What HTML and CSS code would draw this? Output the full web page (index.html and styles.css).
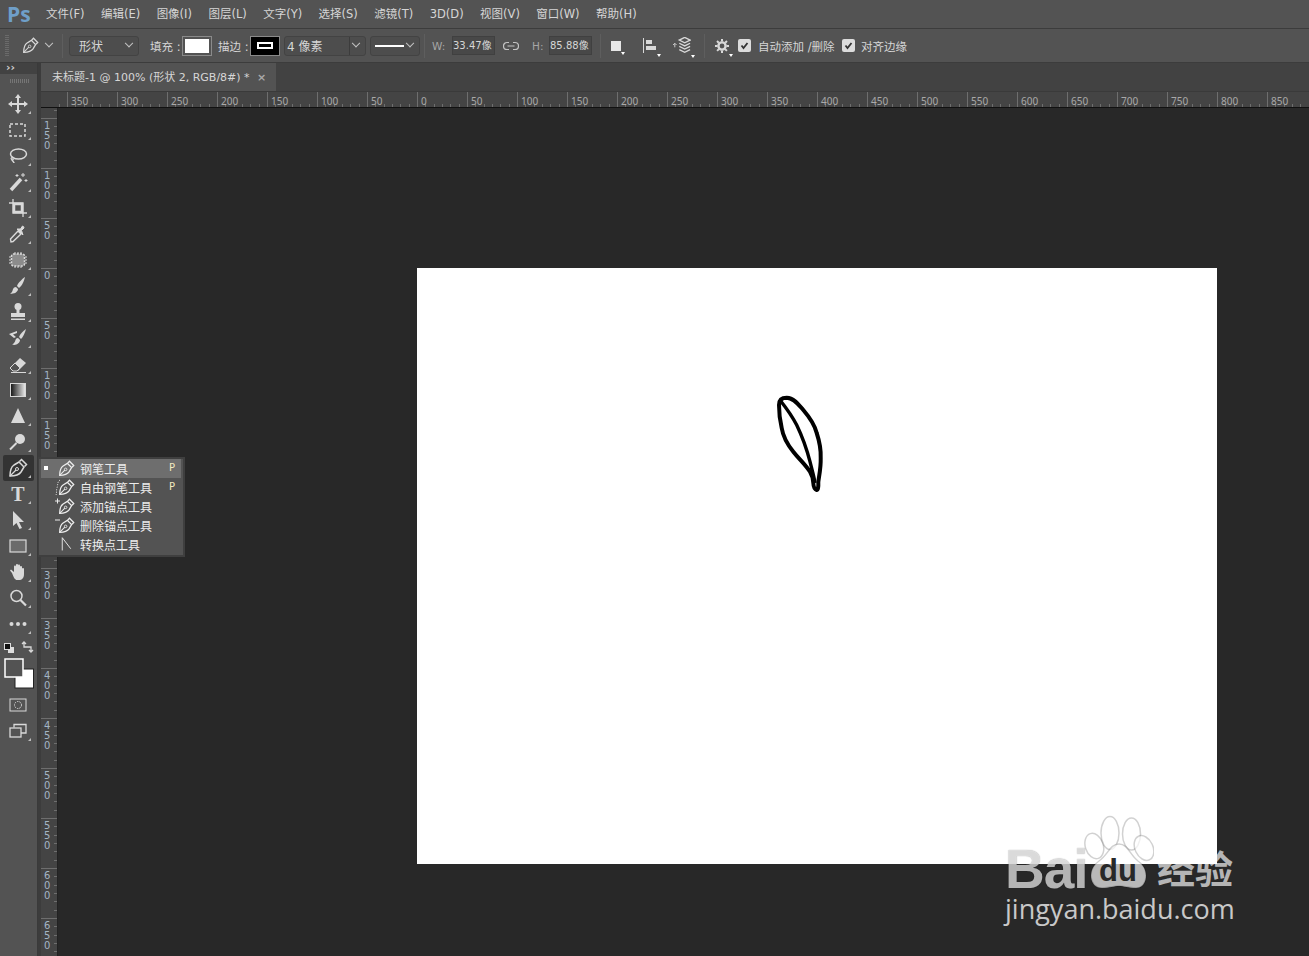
FILE: index.html
```html
<!DOCTYPE html>
<html>
<head>
    <title>Photoshop</title>
    <link rel="stylesheet" href="styles.css">
</head>
<body>
    <svg class="defs" width="0" height="0">
        <defs>
            <symbol id="pen" viewBox="0 0 20 20">
                <path d="M2 18C2 13 3 9 6 7L11 4L16 9L13 14C11 17 7 18 2 18Z" fill="none" stroke="currentColor" stroke-width="1.5"/>
                <path d="M11.5 3.5L13.5 1.5L18.5 6.5L16.500 8.500" fill="none" stroke="currentColor" stroke-width="1.5"/>
                <path d="M2 18L8 12" stroke="currentColor" stroke-width="1.2"/>
                <circle cx="9" cy="11" r="1.500" fill="none" stroke="currentColor" stroke-width="1"/>
            </symbol>
            <linearGradient id="grad" x1="0" x2="1" y1="0" y2="0">
                <stop offset="0" stop-color="#111"/>
                <stop offset="1" stop-color="#eee"/>
            </linearGradient>
        </defs>
    </svg>

    <div class="menubar">
        <span class="logo">Ps</span>
        <nav class="menu">
            <span>文件(F)</span>
            <span>编辑(E)</span>
            <span>图像(I)</span>
            <span>图层(L)</span>
            <span>文字(Y)</span>
            <span>选择(S)</span>
            <span>滤镜(T)</span>
            <span>3D(D)</span>
            <span>视图(V)</span>
            <span>窗口(W)</span>
            <span>帮助(H)</span>
        </nav>
    </div>

    <div class="options">
        <div class="grip"></div>
        <svg class="opt-pen"><use href="#pen"/></svg>
        <span class="chev chev-pen"></span>
        <div class="sep sep-a"></div>
        <div class="select select-shape"><span>形状</span><i class="chev"></i></div>
        <span class="label label-fill">填充 :</span>
        <div class="swatch swatch-fill"><div class="swatch-white"></div></div>
        <span class="label label-stroke">描边 :</span>
        <div class="swatch swatch-stroke"><div class="swatch-hole"></div></div>
        <div class="select select-size"><span>4 像素</span><i class="select-div"></i><i class="chev"></i></div>
        <div class="select select-line"><i class="line-sample"></i><i class="chev"></i></div>
        <div class="sep sep-b"></div>
        <span class="dim dim-w">W:</span>
        <div class="field field-w">33.47像</div>
        <svg class="link" viewBox="0 0 16 10"><path d="M6 1.500H4a3.500 3.500 0 0 0 0 7H6M10 1.500H12a3.500 3.500 0 0 1 0 7H10M4.500 5H11.500" fill="none" stroke="#c4c4c4" stroke-width="1.200"/></svg>
        <span class="dim dim-h">H:</span>
        <div class="field field-h">85.88像</div>
        <div class="sep sep-c"></div>
        <div class="opt-icon icon-square"><div class="square"></div></div>
        <div class="opt-icon icon-align">
            <svg width="14" height="15" viewBox="0 0 14 15"><path d="M.5 0V15" stroke="#d8d8d8"/><path d="M3 2H9V6H3ZM3 8H13V12H3Z" fill="#d8d8d8"/></svg>
        </div>
        <div class="opt-icon icon-stack">
            <svg width="18" height="17" viewBox="0 0 20 18"><path d="M2 7V11M0 8.500L2 6.500L4 8.500" fill="none" stroke="#d8d8d8"/><path d="M13 0L19 3L13 6L7 3ZM7 6.500L13 9.500L19 6.500M7 10L13 13L19 10M7 13.500L13 16.500L19 13.500" fill="none" stroke="#d8d8d8" stroke-width="1.500"/></svg>
        </div>
        <div class="sep sep-d"></div>
        <div class="opt-icon icon-gear">
            <svg width="14" height="14" viewBox="0 0 14 14"><circle cx="7" cy="7" r="3.600" fill="none" stroke="#d8d8d8" stroke-width="2.400"/><path d="M7 0V14M0 7H14M2 2L12 12M12 2L2 12" stroke="#d8d8d8" stroke-width="2" stroke-dasharray="2.500 9"/></svg>
        </div>
        <div class="check check-a"><svg viewBox="0 0 13 13"><path d="M3.500 6.500L5.500 9L9.500 4" fill="none" stroke="#333" stroke-width="1.800"/></svg></div>
        <span class="label label-auto">自动添加 /删除</span>
        <div class="check check-b"><svg viewBox="0 0 13 13"><path d="M3.500 6.500L5.500 9L9.500 4" fill="none" stroke="#333" stroke-width="1.800"/></svg></div>
        <span class="label label-snap">对齐边缘</span>
    </div>

    <div class="main">
        <aside class="tools">
            <div class="tools-head">››</div>
            <div class="tools-grip"></div>
            <div class="tool corner"><svg viewBox="0 0 20 20"><path d="M10 2V18M2 10H18" stroke="currentColor" stroke-width="2"/><path d="M10 0L13 4H7ZM10 20L7 16H13ZM0 10L4 7V13ZM20 10L16 13V7Z" fill="currentColor"/></svg></div>
            <div class="tool corner"><svg viewBox="0 0 20 20"><rect x="2" y="4" width="15" height="12" fill="none" stroke="currentColor" stroke-width="1.500" stroke-dasharray="3 2"/></svg></div>
            <div class="tool corner"><svg viewBox="0 0 20 20"><ellipse cx="10.500" cy="8" rx="8" ry="5" fill="none" stroke="currentColor" stroke-width="1.500"/><path d="M4 12C3 15 6 15 6 17" fill="none" stroke="currentColor" stroke-width="1.500"/><circle cx="4.500" cy="12.500" r="1.500" fill="none" stroke="currentColor"/></svg></div>
            <div class="tool corner"><svg viewBox="0 0 20 20"><path d="M3 18L13 7" stroke="currentColor" stroke-width="3.500"/><path d="M15 1V5M13 3H17M18 7V10M16.500 8.500H19.500M9 2V5M7.500 3.500H10.500" stroke="currentColor"/></svg></div>
            <div class="tool corner"><svg viewBox="0 0 20 20"><path d="M1 5H15V19M5 1V15H19" fill="none" stroke="currentColor" stroke-width="1.300"/><path d="M6 6H14V14H6Z" fill="none" stroke="currentColor" stroke-width="2.500"/></svg></div>
            <div class="tool corner"><svg viewBox="0 0 20 20"><path d="M3 18L2.500 15L10 7L13 10L5 17.500Z" fill="none" stroke="currentColor" stroke-width="1.400"/><path d="M9 5L15 11L13.500 6.500L16 4A2 2 0 0 0 14.500 2L12.500 5Z" fill="currentColor" stroke="currentColor"/></svg></div>
            <div class="tool corner"><svg viewBox="0 0 20 20"><rect x="3.500" y="4" width="13" height="12" rx="2" fill="#8c8c8c" stroke="currentColor" stroke-width="1.500" stroke-dasharray="2 1.200"/><path d="M1 7H3M1 10H3M1 13H3M17 7H19M17 10H19M17 13H19M7 2V4M10 2V4M13 2V4M7 16V18M10 16V18M13 16V18" stroke="currentColor"/></svg></div>
            <div class="tool corner"><svg viewBox="0 0 20 20"><path d="M17 1C14 3 10 7 9 10L11 12C14 10 16 5 17 1Z" fill="currentColor"/><path d="M8 11C5 11 5 14 4 16C3 17 2 17.500 2 17.500C6 18.500 10 16 10 13Z" fill="currentColor"/></svg></div>
            <div class="tool corner"><svg viewBox="0 0 20 20"><circle cx="10" cy="4.500" r="3.500" fill="currentColor"/><path d="M8.500 7H11.500V11H8.500ZM3 11H17V15H3ZM3 16.500H17V18H3Z" fill="currentColor"/></svg></div>
            <div class="tool corner"><svg viewBox="0 0 20 20"><path d="M18 1C15 3 12 6 11 9L13 11C15 9 17 5 18 1Z" fill="currentColor"/><path d="M10 10C7 10 8 13 6 15C5 16 4 16.500 4 16.500C8 18 12 15 12 12Z" fill="currentColor"/><path d="M1 6L9 3V5L5 6.500L8 9L6 10L1 6Z" fill="currentColor"/></svg></div>
            <div class="tool corner"><svg viewBox="0 0 20 20"><path d="M2 14L12 4L18 9L10 17H5Z" fill="currentColor"/><path d="M2 14L7 9L12 14L9 17H5Z" fill="#535353" stroke="currentColor"/><path d="M3 18.500H18" stroke="currentColor"/></svg></div>
            <div class="tool corner"><svg viewBox="0 0 20 20"><rect x="2.500" y="3.500" width="15" height="13" fill="url(#grad)" stroke="#d8d8d8"/></svg></div>
            <div class="tool corner"><svg viewBox="0 0 20 20"><path d="M10 2L17 17H3Z" fill="currentColor"/></svg></div>
            <div class="tool corner"><svg viewBox="0 0 20 20"><circle cx="12" cy="7" r="5" fill="currentColor"/><path d="M8.500 11L2 17.500" stroke="currentColor" stroke-width="2"/></svg></div>
            <div class="tool tool-active corner"><svg><use href="#pen"/></svg></div>
            <div class="tool corner"><span class="tool-t">T</span></div>
            <div class="tool corner"><svg viewBox="0 0 20 20"><path d="M5 1L16 12H11L14 18L11.500 19L8.500 13L5 16Z" fill="currentColor"/></svg></div>
            <div class="tool corner"><svg viewBox="0 0 20 20"><rect x="2" y="4" width="16" height="12" fill="#6b6b6b" stroke="currentColor" stroke-width="1.200"/></svg></div>
            <div class="tool corner"><svg viewBox="0 0 20 20"><path d="M4 11L2 8.500L3 7.500L6 10V4.500C6 3 8 3 8 4.500V3C8 1.500 10 1.500 10 3V3.500C10 2 12 2 12 3.500V5C12 3.500 14 3.500 14 5V7C14 5.500 16 5.500 16 7V12C16 16 14 18 11 18H9C7 18 6 16 4 11Z" fill="currentColor"/></svg></div>
            <div class="tool corner"><svg viewBox="0 0 20 20"><circle cx="8.500" cy="8" r="5.500" fill="none" stroke="currentColor" stroke-width="1.500"/><path d="M12.500 12L18 17.500" stroke="currentColor" stroke-width="2.200"/></svg></div>
            <div class="tool corner"><svg viewBox="0 0 20 20"><circle cx="3.500" cy="10" r="2" fill="currentColor"/><circle cx="10" cy="10" r="2" fill="currentColor"/><circle cx="16.500" cy="10" r="2" fill="currentColor"/></svg></div>
            <svg class="colors" viewBox="0 0 38 52" width="38" height="52">
                <rect x="8" y="7" width="6" height="6" fill="#ddd"/>
                <rect x="4.500" y="3.500" width="6" height="6" fill="#111" stroke="#ddd"/>
                <path d="M24 2V7H31V12M22 4L24 2L26 4M29 10L31 12L33 10" fill="none" stroke="#d8d8d8" stroke-width="1.300"/>
                <rect x="15" y="29" width="18.500" height="19" fill="#fff" stroke="#222"/>
                <rect x="5" y="19" width="18" height="18" fill="#535353" stroke="#fff" stroke-width="1.500"/>
            </svg>
            <div class="tool"><svg viewBox="0 0 20 20"><rect x="2" y="4" width="16" height="12" fill="none" stroke="currentColor"/><circle cx="10" cy="10" r="3.500" fill="none" stroke="currentColor" stroke-dasharray="1.500 1"/></svg></div>
            <div class="tool corner"><svg viewBox="0 0 20 20"><path d="M6 6.500V3.500H18V12H13" fill="none" stroke="currentColor" stroke-width="1.300"/><rect x="2" y="7" width="11" height="9" fill="none" stroke="currentColor" stroke-width="1.300"/></svg></div>
        </aside>

        <div class="flyout">
            <div class="fly-item fly-on"><i class="bullet"></i><svg class="fly-pen"><use href="#pen"/></svg><span>钢笔工具</span><b>P</b></div>
            <div class="fly-item"><svg class="fly-extra" viewBox="0 0 6 17"><path d="M5 1C2 3 3 6 2 9C1 12 2 14 1 16" fill="none" stroke="currentColor" stroke-dasharray="1 1.500"/></svg><svg class="fly-pen"><use href="#pen"/></svg><span>自由钢笔工具</span><b>P</b></div>
            <div class="fly-item"><svg class="fly-extra" viewBox="0 0 6 17"><path d="M0 3H5M2.500 .500V5.500" stroke="currentColor"/></svg><svg class="fly-pen"><use href="#pen"/></svg><span>添加锚点工具</span></div>
            <div class="fly-item"><svg class="fly-extra" viewBox="0 0 6 17"><path d="M0 3H5" stroke="currentColor"/></svg><svg class="fly-pen"><use href="#pen"/></svg><span>删除锚点工具</span></div>
            <div class="fly-item"><svg class="fly-pen" viewBox="0 0 20 20"><path d="M5 2V17M5 2L15 15" fill="none" stroke="currentColor" stroke-width="1.100"/></svg><span>转换点工具</span></div>
        </div>

        <div class="work">
            <div class="tabs">
                <div class="tab">未标题-1 @ 100% (形状 2, RGB/8#) * <i>×</i></div>
            </div>
            <div class="hruler-row">
                <div class="ruler-corner"></div>
                <div class="hruler">
                    <span>350</span><span>300</span><span>250</span><span>200</span><span>150</span><span>100</span><span>50</span><span>0</span><span>50</span><span>100</span><span>150</span><span>200</span><span>250</span><span>300</span><span>350</span><span>400</span><span>450</span><span>500</span><span>550</span><span>600</span><span>650</span><span>700</span><span>750</span><span>800</span><span>850</span>
                </div>
            </div>
            <div class="stage">
                <div class="vruler">
                    <span>1<br>5<br>0</span><span>1<br>0<br>0</span><span>5<br>0</span><span>0</span><span>5<br>0</span><span>1<br>0<br>0</span><span>1<br>5<br>0</span><span>2<br>0<br>0</span><span>2<br>5<br>0</span><span>3<br>0<br>0</span><span>3<br>5<br>0</span><span>4<br>0<br>0</span><span>4<br>5<br>0</span><span>5<br>0<br>0</span><span>5<br>5<br>0</span><span>6<br>0<br>0</span><span>6<br>5<br>0</span>
                </div>
                <div class="canvas">
                    <div class="doc">
                        <svg class="leaf" width="60" height="110" viewBox="0 0 60 110">
                            <path d="M9 15C9 10 12 7.700 16.700 7.700C24 8 29 15 33.300 20C41 29 45 36 46.700 43C50 53 51 60 50.700 68C51 78 49 86 48.300 92C48.500 97 48 100 46.700 100C45 99.500 43.500 97 43.300 93C43 88 42 85 40 81.700C35 74 29 69 23.300 61.700C17 54 13 46 11.700 38C9.500 29 9 22 9 15Z" fill="none" stroke="#000" stroke-width="4" stroke-linejoin="round"/>
                            <path d="M10.700 11C17 19 22 26 26.700 35C32 46 37 60 40 71.700C42 80 44 86 45 93" fill="none" stroke="#000" stroke-width="3.400"/>
                        </svg>
                    </div>
                </div>
            </div>
        </div>
    </div>

    <div class="mark">
        <div class="mark-top">
            <span class="mark-bai">Bai</span>
            <svg class="paw" width="70" height="73" viewBox="0 0 70 73">
                <g fill="rgba(255,255,255,.68)" stroke="rgba(0,0,0,.18)" stroke-width="1.500">
                    <ellipse cx="10.300" cy="31" rx="9" ry="13" transform="rotate(-18 10.300 31)"/>
                    <ellipse cx="26" cy="18" rx="9" ry="16.500"/>
                    <ellipse cx="47.500" cy="19" rx="9" ry="16"/>
                    <ellipse cx="60" cy="33" rx="9" ry="13" transform="rotate(-25 60 33)"/>
                    <path d="M35 29C44 29 46 40 54 46C66 54 64 73 52 73C44 73 40 71 35 71C30 71 26 73 18 73C5 73 3 54 15 46C24 40 26 29 35 29Z"/>
                </g>
                <text x="34" y="66" text-anchor="middle" class="paw-du">du</text>
            </svg>
            <span class="mark-cn">经验</span>
        </div>
        <div class="mark-url">jingyan.baidu.com</div>
    </div>
</body>
</html>
```
FILE: styles.css
```css
* {
    box-sizing: border-box;
}

html, body {
    margin: 0;
    height: 956px;
    overflow: hidden;
}

body {
    position: relative;
    display: flex;
    flex-direction: column;
    background-color: #282828;
    font-family: "DejaVu Sans", "Noto Sans CJK SC", sans-serif;
    font-size: 12px;
    color: #d6d6d6;
}

.defs {
    position: absolute;
}

/* top menu */
.menubar {
    display: flex;
    align-items: center;
    height: 29px;
    background-color: #535353;
    border-bottom: 1px solid #3c3c3c;
}

.logo {
    width: 46px;
    padding-left: 7px;
    font-family: "Open Sans", sans-serif;
    font-size: 21px;
    font-weight: 700;
    color: #6f9fc9;
}

.menu {
    display: flex;
    align-items: baseline;
    gap: 16.400px;
    font-size: 11.500px;
    line-height: 16px;
    white-space: nowrap;
}

/* options bar */
.options {
    display: flex;
    align-items: center;
    height: 34px;
    background-color: #535353;
    border-bottom: 1px solid #3c3c3c;
    white-space: nowrap;
}

.grip {
    width: 4px;
    height: 22px;
    margin-left: 5px;
    background-image: repeating-linear-gradient(180deg, #6a6a6a 0 1px, transparent 1px 2px);
}

.opt-pen {
    width: 17px;
    height: 17px;
    margin-left: 13px;
    color: #d8d8d8;
}

.chev {
    display: inline-block;
    width: 6px;
    height: 6px;
    border-right: 1px solid #c4c4c4;
    border-bottom: 1px solid #c4c4c4;
    transform: rotate(45deg) translate(-2px, -2px);
}

.chev-pen {
    margin-left: 7px;
}

.sep {
    width: 1px;
    height: 24px;
    background-color: #3c3c3c;
    border-right: 1px solid #5e5e5e;
}

.sep-a {
    margin-left: 10px;
}

.select {
    display: flex;
    align-items: center;
    justify-content: space-between;
    height: 20px;
    padding: 0 6px 0 9px;
    background-color: #4d4d4d;
    border: 1px solid #434343;
    border-radius: 3px;
}

.select-shape {
    width: 70px;
    margin-left: 6px;
}

.label {
    font-size: 11.500px;
}

.label-fill {
    margin-left: 11px;
    width: 32px;
}

.swatch {
    display: flex;
    align-items: center;
    justify-content: center;
    width: 30px;
    height: 20px;
    border: 1px solid #8a8a8a;
}

.swatch-white {
    width: 24px;
    height: 14px;
    background-color: #fff;
}

.label-stroke {
    margin-left: 6px;
    width: 32px;
}

.swatch-stroke {
    background-color: #000;
    box-shadow: inset 0 0 0 1px #000;
}

.swatch-hole {
    width: 16px;
    height: 7px;
    border: 2px solid #fff;
    background-color: #000;
}

.select-size {
    position: relative;
    width: 82px;
    margin-left: 4px;
    padding-left: 2px;
}

.select-div {
    position: absolute;
    left: 64px;
    top: 0;
    width: 1px;
    height: 18px;
    background-color: #3c3c3c;
}

.select-line {
    width: 50px;
    margin-left: 4px;
    padding-left: 4px;
}

.line-sample {
    width: 29px;
    height: 2px;
    background-color: #fff;
}

.sep-b {
    margin-left: 4px;
}

.dim {
    color: #a6a6a6;
    font-size: 10.500px;
}

.dim-w {
    margin-left: 7px;
    width: 20px;
}

.field {
    width: 43px;
    height: 19px;
    overflow: hidden;
    line-height: 18px;
    font-size: 10px;
    background-color: #484848;
    border: 1px solid #404040;
}

.link {
    width: 16px;
    height: 10px;
    margin-left: 8px;
}

.dim-h {
    margin-left: 13px;
    width: 17px;
}

.sep-c {
    margin-left: 8px;
}

.opt-icon {
    position: relative;
    display: flex;
}

.opt-icon::after {
    content: "";
    position: absolute;
    right: -4px;
    bottom: -4px;
    border-top: 3px solid #fff;
    border-left: 2px solid transparent;
    border-right: 2px solid transparent;
}

.icon-square {
    margin-left: 10px;
}

.square {
    width: 10px;
    height: 10px;
    background-color: #e6e6e6;
}

.icon-align {
    margin-left: 22px;
}

.icon-stack {
    margin-left: 16px;
}

.sep-d {
    margin-left: 13px;
}

.icon-gear {
    margin-left: 10px;
}

.check {
    display: flex;
    width: 13px;
    height: 13px;
    background-color: #dcdcdc;
    border-radius: 2px;
}

.check-a {
    margin-left: 9px;
}

.check-b {
    margin-left: 7px;
}

.label-auto {
    margin-left: 7px;
    width: 77px;
}

.label-snap {
    margin-left: 6px;
}

/* tools + workspace */
.main {
    position: relative;
    flex: 1;
    display: flex;
    min-height: 0;
    background-color: #3c3c3c;
}

.tools {
    flex: none;
    width: 38px;
    background-color: #535353;
    border-right: 1px solid #3a3a3a;
}

.tools-head {
    height: 11px;
    padding-left: 6px;
    line-height: 9px;
    font-size: 11px;
    font-weight: 700;
    color: #cfcfcf;
    background-color: #424242;
}

.tools-grip {
    width: 20px;
    height: 4px;
    margin: 5px 0 8px 10px;
    background-image: repeating-linear-gradient(90deg, #757575 0 1px, transparent 1px 2px);
}

.tool {
    position: relative;
    display: flex;
    align-items: center;
    justify-content: center;
    height: 26px;
    padding-right: 1px;
    color: #d9d9d9;
}

.tool svg {
    width: 20px;
    height: 20px;
}

.corner::after {
    content: "";
    position: absolute;
    left: 28px;
    bottom: 3px;
    border-bottom: 3px solid #bdbdbd;
    border-left: 3px solid transparent;
}

.tool-active {
    margin: 0 3px;
    background-color: #333;
    border-radius: 2px;
}

.tool-active::after {
    left: 25px;
}

.tool-t {
    font-family: "Liberation Serif", serif;
    font-size: 20px;
    font-weight: 700;
    line-height: 26px;
}

.colors {
    display: block;
    margin-top: 3px;
}

/* pen tool menu */
.flyout {
    position: absolute;
    left: 38px;
    top: 394px;
    width: 147px;
    height: 100px;
    padding: 0 2px;
    background-color: #535353;
    border: 2px solid #3f3f3f;
    border-left-width: 1px;
}

.fly-item {
    position: relative;
    display: flex;
    align-items: center;
    height: 19px;
    padding-left: 39px;
    font-size: 12px;
    color: #ececec;
}

.fly-on {
    background-color: #6e6e6e;
}

.fly-item b {
    position: absolute;
    left: 128px;
    top: 3px;
    font-size: 10px;
    font-weight: 400;
    color: #f3e9c0;
}

.bullet {
    position: absolute;
    left: 3px;
    top: 7px;
    width: 4px;
    height: 4px;
    background-color: #fff;
}

.fly-pen {
    position: absolute;
    left: 17px;
    top: 1px;
    width: 17px;
    height: 17px;
}

.fly-extra {
    position: absolute;
    left: 14px;
    top: 1px;
    width: 6px;
    height: 17px;
}

.work {
    flex: 1;
    display: flex;
    flex-direction: column;
    min-width: 0;
    margin-left: 3px;
}

.tabs {
    height: 29px;
    background-color: #424242;
    border-bottom: 1px solid #3a3a3a;
}

.tab {
    width: 235px;
    height: 28px;
    padding-left: 11px;
    line-height: 29px;
    font-size: 11px;
    white-space: nowrap;
    background-color: #535353;
}

.tab i {
    margin-left: 4px;
    font-style: normal;
    font-weight: 700;
    color: #a8a8a8;
}

.hruler-row {
    display: flex;
    height: 16px;
    border-bottom: 1px solid #111;
}

.ruler-corner {
    width: 17px;
    background-color: #444;
}

.hruler {
    flex: 1;
    display: flex;
    padding-left: 9px;
    overflow: hidden;
    background-color: #444;
    background-image:
        repeating-linear-gradient(90deg, transparent 0 9px, #6e6e6e 9px 10px, transparent 10px 50px),
        repeating-linear-gradient(90deg, transparent 0 .67px, #6e6e6e .67px 1.67px, transparent 1.67px 8.333px);
    background-size: 100% 100%, 100% 3px;
    background-position: 0 0, 0 100%;
    background-repeat: no-repeat;
}

.hruler span {
    flex: none;
    width: 50px;
    padding: 2px 0 0 4px;
    font-family: "Noto Sans", sans-serif;
    font-size: 10px;
    line-height: 14px;
    color: #a9a9a9;
}

.stage {
    flex: 1;
    display: flex;
    min-height: 0;
}

.vruler {
    flex: none;
    width: 17px;
    padding-top: 10px;
    overflow: hidden;
    background-color: #444;
    border-right: 1px solid #222;
    background-image:
        repeating-linear-gradient(180deg, transparent 0 10px, #6e6e6e 10px 11px, transparent 11px 50px),
        repeating-linear-gradient(180deg, transparent 0 1.67px, #6e6e6e 1.67px 2.67px, transparent 2.67px 8.333px);
    background-size: 100% 100%, 3px 100%;
    background-position: 0 0, 100% 0;
    background-repeat: no-repeat;
}

.vruler span {
    display: block;
    height: 50px;
    padding: 3px 0 0 3px;
    font-size: 10px;
    line-height: 10px;
    color: #a3b4c4;
}

.canvas {
    flex: 1;
    padding: 160px 0 0 359px;
    background-color: #282828;
}

.doc {
    position: relative;
    width: 800px;
    height: 596px;
    background-color: #fff;
}

.leaf {
    position: absolute;
    left: 353px;
    top: 122px;
}

/* watermark */
.mark {
    position: absolute;
    left: 1005px;
    top: 815px;
    width: 240px;
}

.mark-top {
    display: flex;
    align-items: flex-end;
    height: 73px;
}

.mark-bai {
    width: 79px;
    font-family: "Liberation Sans", sans-serif;
    font-size: 55px;
    font-weight: 700;
    line-height: 38px;
    letter-spacing: -1px;
    color: rgba(255, 255, 255, .68);
    text-shadow: 0 0 1px rgba(0, 0, 0, .45);
}

.paw {
    flex: none;
}

.paw-du {
    font-family: "Liberation Sans", sans-serif;
    font-size: 31px;
    font-weight: 700;
    fill: #282828;
}

.mark-cn {
    margin-left: 3px;
    font-family: "Noto Sans CJK SC", sans-serif;
    font-size: 38px;
    font-weight: 700;
    line-height: 42px;
    color: rgba(255, 255, 255, .68);
    white-space: nowrap;
}

.mark-url {
    margin-top: 5px;
    font-family: "Open Sans", sans-serif;
    font-size: 27px;
    line-height: 32px;
    color: #c8c8c8;
    white-space: nowrap;
}
```
